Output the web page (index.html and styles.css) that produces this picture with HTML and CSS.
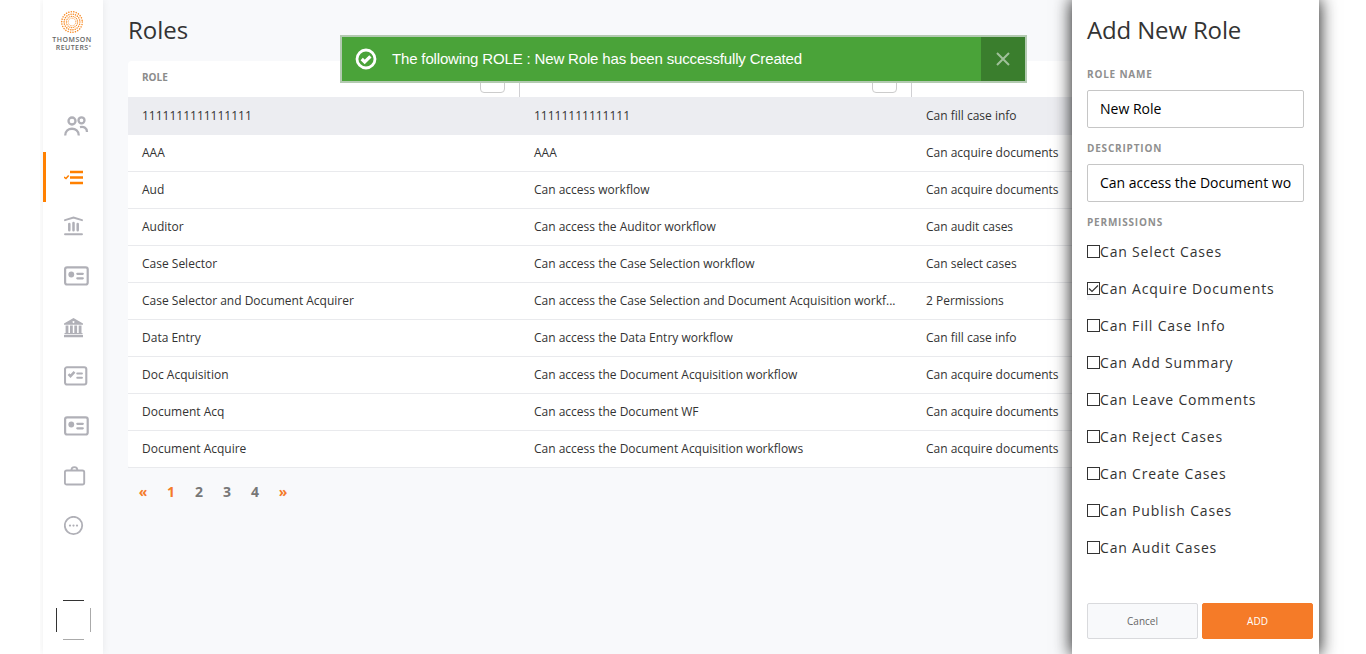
FILE: index.html
```
<!DOCTYPE html>
<html lang="en">
<head>
<meta charset="utf-8">
<title>Roles</title>
<link rel="stylesheet" href="styles.css">
</head>
<body>
<div class="app">
  <nav class="sidebar">
    <div class="logo">
      <svg width="24" height="24" viewBox="0 0 24 24" fill="none" stroke="#f78c28" stroke-linecap="round">
        <circle cx="12" cy="12" r="10.3" stroke-width="1.5" stroke-dasharray="0.1 2.4"/>
        <circle cx="12" cy="12" r="7.9" stroke-width="1.5" stroke-dasharray="0.1 2.15"/>
        <circle cx="12" cy="12" r="5.6" stroke-width="1.2" stroke-dasharray="0.1 1.7"/>
        <circle cx="12" cy="12" r="3.8" stroke-width=".8" stroke-dasharray="0.1 1.4"/>
      </svg>
      <span class="logo-top">THOMSON</span>
      <span class="logo-bottom">REUTERS<sup>°</sup></span>
    </div>
    <a class="nav-item users"><svg width="25" height="22" viewBox="0 0 25 22" fill="none" stroke="#b0b0b7" stroke-width="2.300"><circle cx="8" cy="6" r="3.500"/><circle cx="17.500" cy="5.300" r="3"/><path d="M1.200 20.500c0-9 13.600-9 13.600 0M16 12.200c4-1 7 1 7 4.800"/></svg></a>
    <a class="nav-item active"><svg width="25" height="20" viewBox="0 0 25 20" fill="none" stroke="#ff8000"><path d="M6 4h13M6 9.500h13M6 15h13" stroke-width="2.500"/><path d="M0 9l2 1.500 2.700-3" stroke-width="1.500"/></svg></a>
    <a class="nav-item"><svg width="25" height="20" viewBox="0 0 25 20" fill="none" stroke="#b0b0b7" stroke-width="1.900" stroke-linecap="round"><path d="M1 4.200L9.500 1.500 18 4.200M1 18.200h17"/><path d="M5.300 8v6.300M9.500 7v7.300M13.700 8v6.300" stroke-width="2.500"/></svg></a>
    <a class="nav-item"><svg width="25" height="20" viewBox="0 0 25 20" fill="none" stroke="#b0b0b7" stroke-width="2.200"><rect x="1.100" y="1.300" width="22.600" height="17.200" rx="2"/><circle cx="7.300" cy="8.500" r="2.900" fill="#b0b0b7" stroke="none"/><path d="M13.300 7.800h5.500M13.300 12.300h5.500" stroke-linecap="round"/></svg></a>
    <a class="nav-item bank"><svg width="25" height="20" viewBox="0 0 25 20" fill="#b0b0b7"><path fill-rule="evenodd" d="M9.500 0L19 5.500v1.300H0V5.500zM9.500 3a1 1 0 1 0 .01 0z"/><path d="M1.600 7.500h2.800v8H1.600zM6 7.500h2.800v8H6zM10.300 7.500h2.800v8h-2.800zM14.700 7.500h2.800v8h-2.800zM.5 15h18v1.200H.5zM0 17h19v2.300H0z"/></svg></a>
    <a class="nav-item"><svg width="25" height="20" viewBox="0 0 25 20" fill="none" stroke="#b0b0b7" stroke-width="2.100"><rect x="1" y="1.300" width="21.300" height="17.200" rx="2"/><path d="M4.500 8.200l2 2 4-4.300" stroke-width="2.500"/><path d="M13.300 7.500h4.600M13.300 11.800h4.600" stroke-linecap="round"/></svg></a>
    <a class="nav-item"><svg width="25" height="20" viewBox="0 0 25 20" fill="none" stroke="#b0b0b7" stroke-width="2.200"><rect x="1.100" y="1.300" width="22.600" height="17.200" rx="2"/><circle cx="7.300" cy="8.500" r="2.900" fill="#b0b0b7" stroke="none"/><path d="M13.300 7.800h5.500M13.300 12.300h5.500" stroke-linecap="round"/></svg></a>
    <a class="nav-item"><svg width="25" height="20" viewBox="0 0 25 20" fill="none" stroke="#b0b0b7" stroke-width="1.900"><rect x=".9" y="4.500" width="19.300" height="14" rx="1.800"/><path d="M7.400 4.500c0-4.500 6-4.500 6 0"/></svg></a>
    <a class="nav-item"><svg width="25" height="20" viewBox="0 0 25 20" fill="none" stroke="#b0b0b7" stroke-width="1.800"><circle cx="9.500" cy="9.500" r="8.700"/><g fill="#b0b0b7" stroke="none"><circle cx="6" cy="9.600" r="1.100"/><circle cx="9.500" cy="9.600" r="1.100"/><circle cx="13" cy="9.600" r="1.100"/></g></svg></a>
    <svg class="avatar" width="35" height="40" viewBox="0 0 35 40" fill="none"><path d="M.5 8v24M7 .5h21" stroke="#333"/><path d="M34.500 8v24M7 39.500h21" stroke="#aaa"/></svg>
  </nav>
  <main class="main">
    <h1>Roles</h1>
    <div class="table">
      <div class="row head"><div class="th">ROLE<span class="filter"></span></div><div class="th"><span class="filter"></span></div><div class="th last"></div></div>
      <div class="row selected"><div>1111111111111111</div><div>11111111111111</div><div>Can fill case info</div></div>
      <div class="row"><div>AAA</div><div>AAA</div><div>Can acquire documents</div></div>
      <div class="row"><div>Aud</div><div>Can access workflow</div><div>Can acquire documents</div></div>
      <div class="row"><div>Auditor</div><div>Can access the Auditor workflow</div><div>Can audit cases</div></div>
      <div class="row"><div>Case Selector</div><div>Can access the Case Selection workflow</div><div>Can select cases</div></div>
      <div class="row"><div>Case Selector and Document Acquirer</div><div>Can access the Case Selection and Document Acquisition workf...</div><div>2 Permissions</div></div>
      <div class="row"><div>Data Entry</div><div>Can access the Data Entry workflow</div><div>Can fill case info</div></div>
      <div class="row"><div>Doc Acquisition</div><div>Can access the Document Acquisition workflow</div><div>Can acquire documents</div></div>
      <div class="row"><div>Document Acq</div><div>Can access the Document WF</div><div>Can acquire documents</div></div>
      <div class="row"><div>Document Acquire</div><div>Can access the Document Acquisition workflows</div><div>Can acquire documents</div></div>
    </div>
    <div class="pager"><a class="on">«</a><a class="on">1</a><a>2</a><a>3</a><a>4</a><a class="on">»</a></div>
  </main>
  <aside class="panel">
    <h1>Add New Role</h1>
    <label class="caption">ROLE NAME</label>
    <input class="field" value="New Role">
    <label class="caption">DESCRIPTION</label>
    <input class="field" value="Can access the Document wo">
    <label class="caption">PERMISSIONS</label>
    <div class="perms">
      <div class="perm"><i class="box"></i>Can Select Cases</div>
      <div class="perm"><i class="box checked"><svg width="11" height="11" viewBox="0 0 11 11" fill="none" stroke="#333" stroke-width="1.200"><path d="M1 5.500l3 3L10 2.500"/></svg></i>Can Acquire Documents</div>
      <div class="perm"><i class="box"></i>Can Fill Case Info</div>
      <div class="perm"><i class="box"></i>Can Add Summary</div>
      <div class="perm"><i class="box"></i>Can Leave Comments</div>
      <div class="perm"><i class="box"></i>Can Reject Cases</div>
      <div class="perm"><i class="box"></i>Can Create Cases</div>
      <div class="perm"><i class="box"></i>Can Publish Cases</div>
      <div class="perm"><i class="box"></i>Can Audit Cases</div>
    </div>
    <div class="actions"><button class="btn cancel">Cancel</button><button class="btn add">ADD</button></div>
  </aside>
</div>
<div class="toast">
  <svg class="ok" width="22" height="22" viewBox="0 0 22 22" fill="none" stroke="#fff" stroke-width="2.800"><circle cx="11" cy="11" r="9"/><path d="M6.700 11l3 3 5.700-5.700" stroke-width="3.200"/></svg>
  <span class="message">The following ROLE : New Role has been successfully Created</span>
  <span class="close"><svg width="14" height="14" viewBox="0 0 14 14" stroke="#a0c09a" stroke-width="2"><path d="M1 1l12 12M13 1L1 13"/></svg></span>
</div>
</body>
</html>
```
FILE: styles.css
```
* { box-sizing: border-box; }
body { margin: 0; height: 654px; overflow: hidden; background: #fff; color: #333; font: 12px "Open Sans", sans-serif; }
.app { display: flex; width: 1276px; height: 654px; margin-left: 43px; background: #f8f9fb; }
h1 { margin: 0; font: 400 24px/31px "Open Sans", sans-serif; color: #333; }

.sidebar { display: flex; flex-direction: column; width: 60px; background: #fff; box-shadow: 0 0 8px rgba(0, 0, 0, .07); clip-path: inset(0 -10px 0 -3px); }
.logo { display: flex; flex-direction: column; align-items: center; height: 102px; padding: 10px 2px 0 0; color: #666; font: 600 7px/8px "Open Sans", sans-serif; }
.logo-top { margin-top: 2px; letter-spacing: .5px; }
.logo-bottom { padding-left: 3px; letter-spacing: .45px; white-space: nowrap; }
.logo sup { font-size: 5px; line-height: 0; vertical-align: 1px; }
.nav-item { display: flex; align-items: center; height: 50px; padding-left: 21px; }
.nav-item.users { padding-bottom: 3px; }
.nav-item.active { padding: 2px 0 0 18px; border-left: 3px solid #ff8000; margin-bottom: -1px; }
.nav-item.bank { padding-top: 3px; }
.avatar { display: block; margin: auto 0 14px 13px; }

.main { width: 969px; padding: 14px 0 0 25px; overflow: hidden; }
.table { margin-top: 16px; background: #fff; border-radius: 4px 0 0 4px; }
.row { display: grid; grid-template-columns: 392px 392px 1fr; height: 37px; line-height: 36px; border-bottom: 1px solid #e9eaed; white-space: nowrap; }
.row > div { padding-left: 14px; }
.row.selected { background: #ecedf1; border-color: #ecedf1; height: 38px; line-height: 37px; }
.row.head { height: 36px; border: 0; }
.row .th { display: flex; justify-content: space-between; padding-right: 14px; color: #8b8b8b; font-weight: 700; font-size: 10px; line-height: 33px; border-right: 1px solid #d0d0d3; }
.row .th.last { border: 0; }
.filter { width: 25px; height: 25px; margin: 7px 0 0 auto; border: 1px solid #ccc; border-radius: 4px; }
.pager { display: flex; padding: 14px 0 0 1px; color: #777; font-size: 14px; font-weight: 700; line-height: 20px; }
.pager a { width: 28px; text-align: center; }
.pager .on { color: #f47b28; }

.panel { position: relative; width: 247px; padding: 14px 6px 0 15px; background: #fff; box-shadow: 0 0 16px 1px #222; }
.panel h1 { letter-spacing: -.15px; }
.caption { display: block; margin-top: 22px; color: #8f8f8f; font-size: 10px; font-weight: 700; line-height: 15px; letter-spacing: .8px; }
.field { display: block; width: 217px; height: 38px; margin: 8px 0 -9px; padding: 0 12px 2px; border: 1px solid #c6c6c6; border-radius: 2px; color: #000; font: 14px "Open Sans", sans-serif; }
.perms { margin-top: 3px; }
.perm { display: flex; align-items: center; height: 37px; font-size: 14px; letter-spacing: .82px; }
.box { display: block; width: 13px; height: 13px; border: 1px solid #333; }
.box.checked { box-shadow: 0 5px #f5f6f8; }
.box svg { display: block; }
.actions { display: flex; gap: 4px; margin-top: 37px; }
.btn { width: 111px; height: 36px; border: 1px solid #d9dadd; border-radius: 2px; background: #f8f9fb; color: #666; font: 10px "Open Sans", sans-serif; }
.btn.add { border-color: #f57b28; background: #f57b28; color: #fff; }

.toast { position: absolute; left: 340px; top: 35px; display: flex; align-items: center; width: 687px; height: 48px; border: 2px solid #b3cab1; background: #4aa339; color: #fff; font: 15px "Liberation Sans", Arial, sans-serif; }
.ok { margin: 0 14px 1px 13px; }
.message { padding: 0 0 2px 1px; letter-spacing: -.16px; }
.close { display: flex; align-items: center; justify-content: center; width: 44px; height: 44px; margin-left: auto; background: #3a7e2d; }
.close svg { margin-right: 1px; }
```
